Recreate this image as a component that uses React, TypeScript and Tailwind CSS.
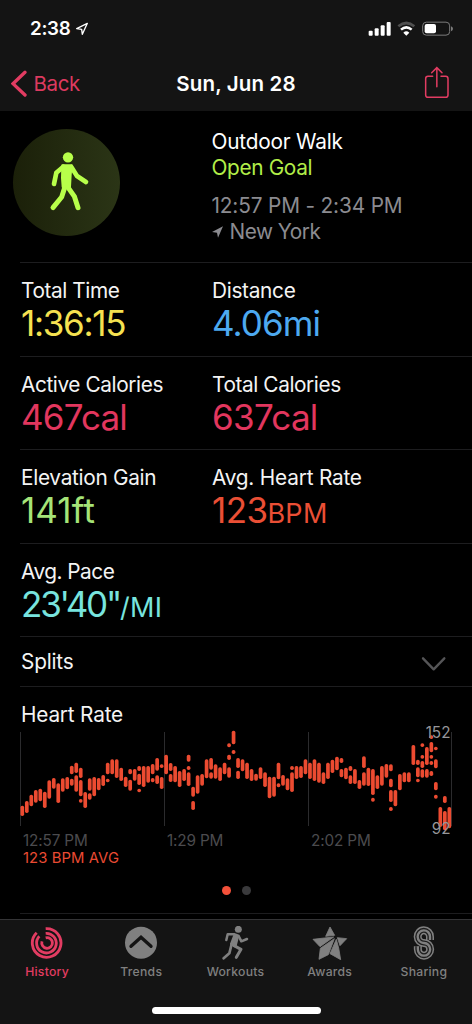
import React from "react";

type Range = [number, number];

// Heart rate ranges per minute, top and bottom of every bar
const heartRate: Range[][] = [
  [[73.7, 84]], [[69, 81]], [[62.7, 74.3]], [[58, 70.7]], [[56.7, 69.3]], [[59.7, 76]],
  [[48.3, 66.7]], [[46, 56.7]], [[51.3, 71]], [[46.3, 59.7]], [[45, 57.3]],
  [[33.7, 42.3], [46.7, 53.7]],
  [[30.7, 41], [43.3, 59.7]],
  [[35.7, 46], [48, 64.3], [67, 70.7]],
  [[60, 76]],
  [[46.3, 58.7], [61.3, 67.7]],
  [[45, 64.3]], [[46, 58.3]], [[43, 54]],
  [[30.7, 42.3], [46.7, 50.3]],
  [[27.3, 42.3]], [[27.3, 46]], [[35.7, 49]], [[44.7, 55]],
  [[37, 42.3], [47.7, 58.7]],
  [[37, 48.7]],
  [[34, 39], [41.7, 53], [56.7, 60.3]],
  [[34, 55]], [[34, 50.7]],
  [[32, 42.3], [46, 50.3]],
  [[26, 38.7], [43.3, 52]],
  [[32.3, 36], [45, 57]],
  [[22.7, 42.3]],
  [[31, 39], [42, 50]],
  [[34, 50.3]], [[39, 55]], [[37, 49]],
  [[22.7, 29.7], [34, 38], [40.3, 54]],
  [[54.7, 64.7], [69, 78]],
  [[43.3, 61.7]], [[42, 53.7]], [[27.3, 46.3]],
  [[26, 37.7], [40.3, 46.7]],
  [[32.3, 46.7]], [[35.3, 49]], [[30.7, 42.3]],
  [[11.3, 15.3], [22.7, 28], [35.3, 45.7]],
  [[-1.3, 12.3], [18, 22]],
  [[26, 36], [38.7, 47]],
  [[27.3, 39.3]], [[30.7, 47]], [[37, 49]], [[41.7, 48.7]], [[35.3, 47]],
  [[40.3, 55]], [[44.7, 66.3]], [[44.7, 64.7]],
  [[30.7, 47.3], [51.3, 55.3]],
  [[43, 53.7]], [[46.3, 58.3]],
  [[34, 38], [40.3, 60]],
  [[34, 47]], [[34, 46]], [[27.3, 42.3]], [[30.7, 47]], [[27.3, 49]], [[30.7, 50.7]],
  [[40.3, 52]], [[30.7, 47]], [[27.7, 41]], [[24.7, 38.3]],
  [[26, 31], [37, 45.3]],
  [[35.7, 47.3]],
  [[34, 39], [43.3, 52]],
  [[37, 52]], [[48, 57]],
  [[24.3, 36], [40.3, 53.7]],
  [[35.7, 54]],
  [[37, 63], [65.7, 69.7]],
  [[43.3, 57]], [[34, 53.7]], [[32, 45.7]],
  [[32.3, 39.3], [46.7, 55.3], [58, 70], [75, 79]],
  [[58, 74.3]], [[42, 58.3]], [[40.3, 50.3]], [[40.3, 50.3]], [[13, 33]],
  [[27.7, 33], [35.3, 45.3], [46.7, 50.3]],
  [[11.3, 15], [23, 26.7], [29, 36], [37.3, 45.7]],
  [[15, 33], [37, 45.7]],
  [[3.3, 7], [10, 20.3], [23, 26.7], [29, 33], [39, 44]],
  [[14.7, 18.3], [27.3, 36.3], [50, 58.3], [62.7, 66.7]],
  [[75, 95]],
  [[64, 71], [79, 98.3]],
  [[75, 96.3]],
];

interface StatProps {
  label: string;
  value: string;
  unit?: string;
  color: string;
  labelClass?: string;
}

const Stat: React.FC<StatProps> = ({ label, value, unit, color, labelClass = "" }) => (
  <div className="whitespace-nowrap">
    <div className={`text-[20.8px] leading-[26px] text-[#f4f4f4] ${labelClass}`}>{label}</div>
    <div className={`text-[35px] leading-[38px] ${color}`}>
      {value}
      {unit && <span className="text-[27px] leading-none tracking-[0.3px]">{unit}</span>}
    </div>
  </div>
);

const StatRow: React.FC<{ children: React.ReactNode }> = ({ children }) => (
  <div className="ml-5 grid h-[93.6px] shrink-0 grid-cols-[191px_1fr] border-t border-[#1d1d1f] pt-[15px] pl-px">
    {children}
  </div>
);

const StatusBar = () => (
  <div className="flex h-[58px] items-center justify-between pr-[18px] pl-[30px]">
    <div className="flex items-center gap-[5px]">
      <span className="text-[18.8px] leading-5 font-semibold tracking-[-0.3px] text-white">2:38</span>
      <svg width="14" height="14" viewBox="226 66 40 42" fill="none">
        <path d="M230 86 L262 70 L247 103 L245 88 Z" stroke="#fff" strokeWidth="4" strokeLinejoin="round" />
      </svg>
    </div>
    <svg width="86" height="16" viewBox="399 64 258 48" fill="#fff">
      <rect x="401" y="93" width="12" height="15" rx="3" />
      <rect x="419" y="86" width="12" height="22" rx="3" />
      <rect x="437" y="77" width="12" height="31" rx="3" />
      <rect x="455" y="67" width="12" height="41" rx="3" />
      <path d="M490 80 Q514 60 538 80" fill="none" stroke="#505050" strokeWidth="8" />
      <path d="M498 90 Q514 76 530 90" fill="none" stroke="#fff" strokeWidth="7.5" />
      <path d="M505 99 Q514 91 523 99 L514 108 Z" />
      <rect x="563" y="67.500" width="81" height="39" rx="11" fill="none" stroke="#7c7c7c" strokeWidth="3" />
      <rect x="569" y="73" width="34" height="28" rx="6" />
      <path d="M648 80 Q654 82 654 87 Q654 92 648 95 Z" fill="#7c7c7c" />
    </svg>
  </div>
);

const NavBar = () => (
  <div className="grid h-[51px] grid-cols-[1fr_auto_1fr] items-center">
    <button className="flex items-center gap-[6.5px] pl-[11px] text-[20.5px] leading-6 text-[#dc3a5f]">
      <svg width="16" height="27" viewBox="33 209 48 81" fill="none">
        <path d="M75 216 L39 250 L75 284" stroke="#e23c62" strokeWidth="10" strokeLinecap="round" strokeLinejoin="miter" />
      </svg>
      <span className="tracking-[-0.35px]">Back</span>
    </button>
    <h1 className="text-[20.5px] leading-6 font-semibold tracking-[0.15px] whitespace-nowrap text-white">
      Sun, Jun 28
    </h1>
    <button className="mr-[22px] mb-0.5 justify-self-end" aria-label="Share">
      <svg width="26" height="33" viewBox="565 198 78 99" fill="none" stroke="#e23c62" strokeWidth="4.500" strokeLinecap="round">
        <path d="M591 229 H577 Q570 229 570 236 V285 Q570 292 577 292 H630 Q637 292 637 285 V236 Q637 229 630 229 H616" />
        <path d="M603.500 260 V204 M588 218 L603.500 203 L619 218" />
      </svg>
    </button>
  </div>
);

const Summary = () => (
  <div className="flex h-[151px] shrink-0 pl-[12.5px]">
    <div className="mt-[17.5px] h-[107px] w-[107px] rounded-full bg-linear-to-r from-[#1b2009] to-[#2b3516]">
      <svg width="107" height="107" viewBox="38 41 321 321" fill="none" stroke="#b8ff4a" strokeLinecap="round" strokeLinejoin="round">
        <circle cx="203" cy="126" r="15.500" fill="#b8ff4a" stroke="none" />
        <path d="M186 150 H214 L211 178 L209 215 L187 215 L185 188 Z" fill="#b8ff4a" strokeWidth="6" />
        <path d="M189 154 L168 172 L161 206" strokeWidth="14" />
        <path d="M213 155 L230 182 L257 200" strokeWidth="14" />
        <path d="M193 217 L184 245 L158 277" strokeWidth="15" />
        <path d="M203 216 L222 243 L233 277" strokeWidth="15" />
      </svg>
    </div>
    <div className="mt-[18px] ml-[92px] text-[20.8px] leading-[26px] whitespace-nowrap">
      <div className="tracking-[-0.2px] text-white">Outdoor Walk</div>
      <div className="tracking-[-0.35px] text-[#b2ee48]">Open Goal</div>
      <div className="mt-3 tracking-[-0.15px] text-[#8b8b90]">12:57 PM - 2:34 PM</div>
      <div className="flex items-center gap-[7px] text-[#8b8b90]">
        <svg width="11" height="12" viewBox="36 333 33 36" fill="#8b8b90">
          <path d="M36 351 L69 334 L54 368 L51 353 Z" />
        </svg>
        <span className="tracking-[-0.5px]">New York</span>
      </div>
    </div>
  </div>
);

const HeartRateChart = () => (
  <div className="relative mt-[3px] h-[97px]">
    <svg className="block overflow-visible" width="472" height="97" viewBox="0 -1 472 97">
      {[20.5, 164.5, 308.5, 451.5].map((x) => (
        <rect key={x} x={x - 0.5} y="0" width="1" height="94" fill="#2b2b2d" />
      ))}
      {heartRate.map((bars, i) =>
        bars.map(([top, bottom]) => (
          <rect
            key={`${i}-${top}`}
            x={20.45 + i * 4.495}
            y={top}
            width="3.700"
            height={bottom - top}
            rx="1.700"
            fill="#ec4b31"
          />
        )),
      )}
    </svg>
    <span className="absolute -top-[6px] right-[21.5px] text-[15.3px] leading-4 text-[#96969a]">152</span>
    <span className="absolute top-[90px] right-[21.5px] text-[15.3px] leading-4 text-[#96969a]">92</span>
  </div>
);

const HeartRate = () => (
  <section className="h-[226px] shrink-0 pt-[15px]">
    <h2 className="pl-[21px] text-[20.8px] leading-[26px] tracking-[-0.2px] text-[#f4f4f4]">Heart Rate</h2>
    <HeartRateChart />
    <div className="mt-1 grid grid-cols-[144px_144px_1fr] pl-[23px] text-[15.3px] leading-[18px] tracking-[-0.15px] text-[#4b4b4e]">
      <span>12:57 PM</span>
      <span>1:29 PM</span>
      <span>2:02 PM</span>
    </div>
    <div className="pl-[23px] text-[14.8px] leading-[17px] tracking-[0.1px] text-[#ea4b33]">123 BPM AVG</div>
    <div className="mt-[19px] flex justify-center gap-[11px]">
      <span className="h-[9px] w-[9px] rounded-full bg-[#f4513a]" />
      <span className="h-[9px] w-[9px] rounded-full bg-[#3a3a3c]" />
    </div>
  </section>
);

const HistoryIcon = () => (
  <svg width="34" height="34" viewBox="89 64 102 102" fill="none" stroke="currentColor" strokeWidth="8.500">
    <path d="M136 72 A43 43 0 1 1 109 84" />
    <path d="M136 86 A29.500 29.500 0 1 1 117 95" />
    <path d="M136 99.500 A16 16 0 1 1 125 110" />
  </svg>
);

const TrendsIcon = () => (
  <svg width="34" height="34" viewBox="372 64 102 102" fill="none">
    <circle cx="423" cy="114" r="48" fill="currentColor" />
    <path d="M393 125 L423 98 L453 125" stroke="#141414" strokeWidth="10" strokeLinecap="round" />
  </svg>
);

const WorkoutsIcon = () => (
  <svg width="34" height="34" viewBox="656 63 102 102" fill="none" stroke="currentColor" strokeWidth="8" strokeLinecap="round" strokeLinejoin="round">
    <circle cx="717" cy="73" r="10.500" fill="currentColor" stroke="none" />
    <path d="M681 105 L685 88 L706 88 L718 93 L726 109 L743 102" strokeWidth="7.500" />
    <path d="M706 91 L715 95 L708 123 L696 117 Z" fill="currentColor" />
    <path d="M697 117 L690 145 L673 160" />
    <path d="M704 122 L725 133 L711 157" strokeWidth="9" />
  </svg>
);

const AwardsIcon = () => (
  <svg width="36" height="34" viewBox="229 64 108 102" fill="currentColor" stroke="currentColor" strokeWidth="2.500" strokeLinejoin="round">
    <path d="M283 67 L270 95 L297 92 Z" />
    <path d="M232 104 L266 100 L294 97 L253 126 Z" />
    <path d="M254 131 L296 102 L278 150 L250 164 Z" />
    <path d="M302 104 L309 130 L315 165 L283 147 Z" />
    <path d="M333 102 L305 99 L313 123 Z" />
  </svg>
);

const SharingIcon = () => {
  const s = "M582 105 V95 A18.500 19 0 1 0 564 114 A18.500 19 0 1 1 545.500 133 V124";
  return (
    <svg width="34" height="34" viewBox="513 63 102 102" fill="none">
      <path d={s} stroke="currentColor" strokeWidth="24" />
      <path d={s} stroke="#1d1d1d" strokeWidth="15" />
      <path d={s} stroke="currentColor" strokeWidth="7" />
    </svg>
  );
};

const tabs = [
  { name: "History", icon: <HistoryIcon />, active: true },
  { name: "Trends", icon: <TrendsIcon /> },
  { name: "Workouts", icon: <WorkoutsIcon /> },
  { name: "Awards", icon: <AwardsIcon /> },
  { name: "Sharing", icon: <SharingIcon /> },
];

const TabBar = () => (
  <nav className="h-[105px] shrink-0 border-t border-[#343436] bg-[#141414]">
    <div className="mr-px grid h-[87px] grid-cols-5">
      {tabs.map((tab) => (
        <div
          key={tab.name}
          className={`flex flex-col items-center pt-1.5 ${tab.active ? "text-[#e23c62]" : "text-[#808080]"}`}
        >
          {tab.icon}
          <span className="mt-1 text-[12.2px] leading-4 font-medium tracking-[0.25px]">{tab.name}</span>
        </div>
      ))}
    </div>
    <div className="mx-auto h-[7px] w-[169px] rounded-full bg-white" />
  </nav>
);

export default function App() {
  return (
    <div className="flex h-[1024px] w-[472px] flex-col overflow-hidden bg-black font-['Inter',sans-serif]">
      <header className="h-[111px] shrink-0 bg-[#141414]">
        <StatusBar />
        <NavBar />
      </header>

      <Summary />

      <StatRow>
        <Stat label="Total Time" value="1:36:15" color="text-[#f5e150] tracking-[-1.3px]" labelClass="tracking-[-0.4px]" />
        <Stat label="Distance" value="4.06mi" color="text-[#4da9f0] tracking-[-0.9px]" labelClass="tracking-[-0.3px]" />
      </StatRow>
      <StatRow>
        <Stat label="Active Calories" value="467cal" color="text-[#e2365e] tracking-[-0.8px]" labelClass="tracking-[-0.4px]" />
        <Stat label="Total Calories" value="637cal" color="text-[#e2365e] tracking-[-0.7px]" labelClass="tracking-[-0.4px]" />
      </StatRow>
      <StatRow>
        <Stat label="Elevation Gain" value="141ft" color="text-[#a5e478] tracking-[0.1px]" labelClass="tracking-[-0.3px]" />
        <Stat label="Avg. Heart Rate" value="123" unit="BPM" color="text-[#ea4f35] tracking-[-0.6px]" labelClass="tracking-[-0.2px]" />
      </StatRow>
      <StatRow>
        <Stat label="Avg. Pace" value={"23'40\""} unit="/MI" color="text-[#78e4de] tracking-[-2.2px]" labelClass="tracking-[-0.5px]" />
      </StatRow>

      <div className="ml-5 flex h-[50.6px] shrink-0 items-center justify-between border-y border-[#1d1d1f] pt-px pr-[25px] pl-px">
        <span className="text-[20.8px] leading-[26px] tracking-[-0.2px] text-[#f4f4f4]">Splits</span>
        <svg className="mt-1" width="26" height="16" viewBox="334 34 78 48" fill="none">
          <path d="M340 41 L372 74 L404 41" stroke="#555557" strokeWidth="7" strokeLinecap="round" strokeLinejoin="round" />
        </svg>
      </div>

      <HeartRate />

      <div className="ml-5 h-1.5 shrink-0 border-t border-[#1d1d1f]" />
      <TabBar />
    </div>
  );
}
